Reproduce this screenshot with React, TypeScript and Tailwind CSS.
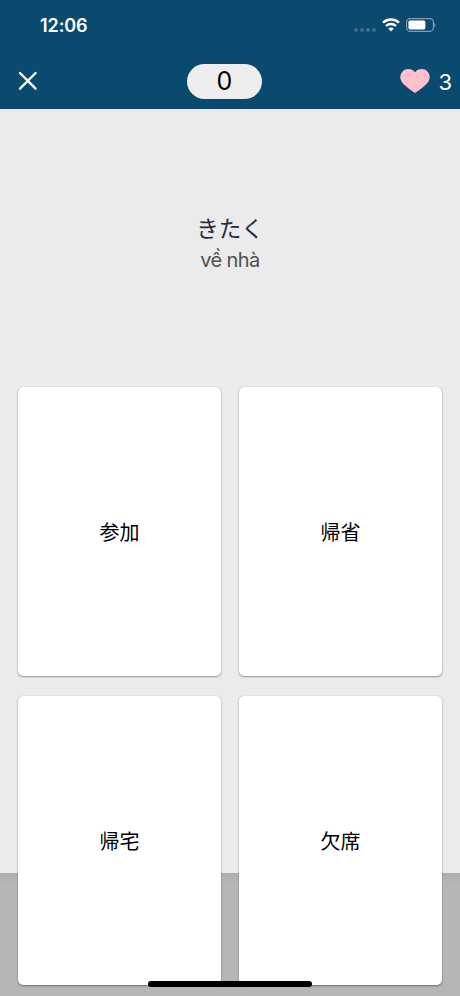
import React, { useState } from "react";

const CARDS = ["参加", "帰省", "帰宅", "欠席"];

const StatusBar: React.FC = () => (
  <div className="flex h-[51px] items-center justify-between pl-10 pr-6">
    <span className="text-[18px] font-semibold leading-none tracking-[-0.1px]">12:06</span>
    <div className="mt-[-1px] flex items-center">
      {/* no signal */}
      <div className="mr-[6px] mt-[9px] flex gap-[2px]">
        {[0, 1, 2, 3].map((dot) => (
          <span key={dot} className="size-[4px] rounded-full bg-[#3c6d8b]" />
        ))}
      </div>
      <svg width="18" height="14" viewBox="0 0 18 14" fill="none" className="mr-[6px]">
        <path d="M1 4.7C5.4.5 12.6.5 17 4.7" stroke="white" strokeWidth="2.5" />
        <path d="M4 8C6.8 5.3 11.2 5.3 14 8" stroke="white" strokeWidth="2.3" />
        <path d="M6.2 10.5C7.8 9 10.2 9 11.8 10.5L9 13.4Z" fill="white" />
      </svg>
      <svg width="30" height="14" viewBox="0 0 30 14" fill="none">
        <rect x="0.6" y="0.6" width="26.8" height="12.8" rx="3.7" stroke="#7f9fb3" strokeWidth="1.1" />
        <rect x="2.4" y="2.4" width="17" height="9.2" rx="1.8" fill="white" />
        <path d="M28.3 4.7c1.6.7 1.6 3.9 0 4.6Z" fill="#7f9fb3" />
      </svg>
    </div>
  </div>
);

const App: React.FC = () => {
  const [lives] = useState(3);
  const [score] = useState(0);

  return (
    <div
      lang="ja"
      className="relative flex h-[996px] w-[460px] flex-col overflow-hidden bg-[linear-gradient(to_bottom,#ebebeb_873px,#aeaeae_873px,#b6b6b6_885px)] font-[Inter,'Noto_Sans_CJK_JP',sans-serif]"
    >
      <header className="h-[109px] shrink-0 bg-[#0b4a6f] text-white">
        <StatusBar />
        <div className="flex h-[60px] items-center pl-[18px] pr-[8px]">
          <button aria-label="Close" className="w-[169px]">
            <svg width="20" height="20" viewBox="0 0 20 20" stroke="white" strokeWidth="2.3" strokeLinecap="round">
              <path d="M2 2L17.6 17.6M17.6 2L2 17.6" />
            </svg>
          </button>
          <div className="flex h-[35px] w-[75px] items-center justify-center rounded-full bg-[#eeeeee] text-[25px] leading-none text-black">
            {score}
          </div>
          <div className="ml-auto flex items-center gap-[8px]">
            <svg width="30" height="24" viewBox="0 0 30 24" fill="#ffc0cb">
              <path d="M15 3.2C11.8-.8 5.8-.9 2.6 2.4C-.7 5.8-.4 11 3 14.5C6.5 18 10.5 21.2 15 24C19.5 21.2 23.5 18 27 14.5C30.4 11 30.7 5.8 27.4 2.4C24.2-.9 18.2-.8 15 3.2Z" />
            </svg>
            <span className="mt-[2px] text-[22px] leading-none">{lives}</span>
          </div>
        </div>
      </header>

      {/* Question */}
      <section className="flex h-[278px] shrink-0 flex-col items-center pt-[104px]">
        <p className="text-[22.5px] leading-[32px] text-[#292b3d]">きたく</p>
        <p className="text-[20px] leading-[31px] tracking-[-0.6px] text-[#505050]">về nhà</p>
      </section>

      {/* Answers */}
      <main className="grid grid-cols-2 gap-x-[18px] gap-y-[20px] px-[18px]">
        {CARDS.map((word) => (
          <button
            key={word}
            className="h-[289px] rounded-[5px] bg-white pt-[3px] text-[20px] text-black shadow-[0_1px_2px_rgba(0,0,0,0.35),0_0_1px_rgba(0,0,0,0.3)]"
          >
            {word}
          </button>
        ))}
      </main>

      {/* Home indicator */}
      <div className="absolute bottom-[9px] left-[148px] h-[6px] w-[164px] rounded-full bg-black" />
    </div>
  );
};

export default App;
